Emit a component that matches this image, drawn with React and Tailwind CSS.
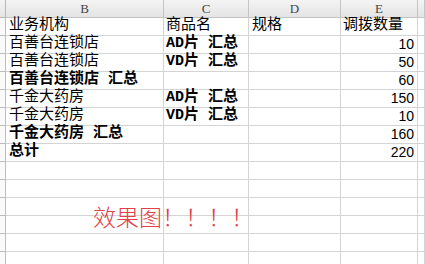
import React from "react";

const rows = [
  { b: "业务机构", c: "商品名", d: "规格", e: "调拨数量", head: true },
  { b: "百善台连锁店", c: "AD片 汇总", e: "10" },
  { b: "百善台连锁店", c: "VD片 汇总", e: "50" },
  { b: "百善台连锁店 汇总", bBold: true, e: "60" },
  { b: "千金大药房", c: "AD片 汇总", e: "150" },
  { b: "千金大药房", c: "VD片 汇总", e: "10" },
  { b: "千金大药房 汇总", bBold: true, e: "160" },
  { b: "总计", bBold: true, e: "220" },
  {}, {}, {}, {}, {}, {},
];

const cell = "h-[18px] border-r border-b border-[#d4d4d4] overflow-visible whitespace-pre flex items-end pb-[1px]";
const cjk = { fontFamily: '"Liberation Mono", "Noto Sans CJK SC", monospace' };

export default function App() {
  return (
    <div className="relative w-[425px] h-[264px] overflow-hidden bg-white">
      <div className="grid grid-cols-[6px_158px_85px_92px_77px_1fr]">
        {/* header */}
        <div className="h-[18px] border-r border-b border-[#b8b8b8] bg-gradient-to-b from-[#f4f4f4] to-[#e4e4e4]" />
        {["B", "C", "D", "E", ""].map((l, i) => (
          <div
            key={i}
            className="h-[18px] border-r border-b border-[#c4c4c4] bg-gradient-to-b from-[#f4f4f4] to-[#e4e4e4] flex items-center justify-center text-[13px] text-[#444] font-['Liberation_Serif',serif]"
          >
            {l}
          </div>
        ))}
        {rows.map((r, i) => (
          <React.Fragment key={i}>
            <div className="h-[18px] border-r border-b border-[#bdbdbd] bg-[#fafafa]" />
            <div
              className={`${cell} pl-[3px] text-[15px] leading-[16px] text-black ${r.bBold ? "font-bold" : ""}`}
              style={cjk}
            >
              {r.b || ""}
            </div>
            <div
              className={`${cell} pl-[2px] text-[15px] leading-[16px] text-black ${r.head ? "" : "font-bold"}`}
              style={cjk}
            >
              {r.c || ""}
            </div>
            <div className={`${cell} pl-[3px] text-[15px] leading-[16px] text-black`} style={cjk}>
              {r.d || ""}
            </div>
            <div
              className={`${cell} ${r.head ? "pl-[2px] justify-start" : "pr-[3px] justify-end"} text-black ${r.head ? "text-[15px] leading-[16px]" : "text-[14px] leading-[16px] font-['Liberation_Sans',sans-serif]"}`}
              style={r.head ? cjk : undefined}
            >
              {r.e || ""}
            </div>
            <div className={cell} />
          </React.Fragment>
        ))}
      </div>
      <div className="absolute left-[93px] top-[203px] text-[23px] leading-[26px] text-[#e0404a] whitespace-nowrap font-['Noto_Sans_CJK_SC',sans-serif] font-light">
        效果图！！！！
      </div>
    </div>
  );
}
